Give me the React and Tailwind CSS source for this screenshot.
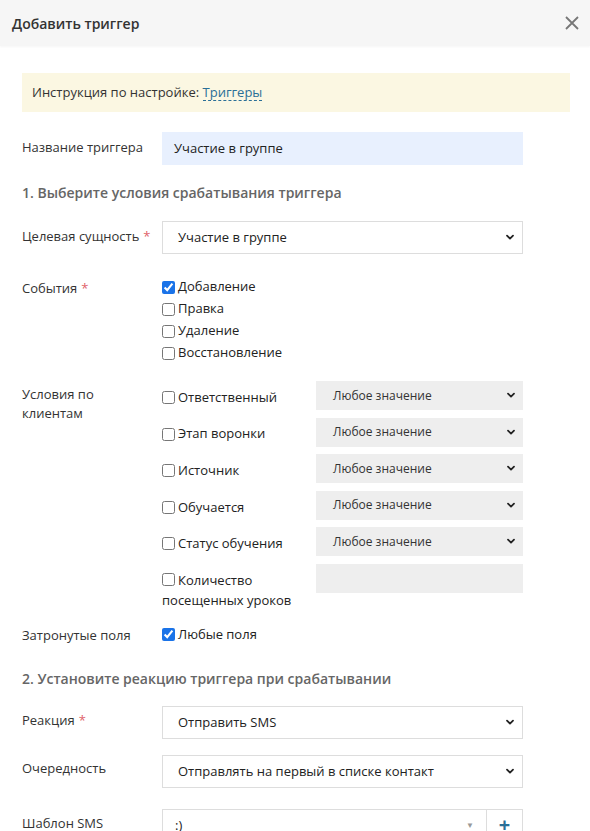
import { useState } from 'react';

function Chevron() {
  return (
    <svg width="10" height="7" viewBox="0 0 10 7" className="shrink-0 mr-[1px]">
      <path d="M2 1.6 L5 4.6 L8 1.6" fill="none" stroke="#222" strokeWidth="1.8" strokeLinecap="round" strokeLinejoin="round" />
    </svg>
  );
}

function Select({ value, small }) {
  if (small) {
    return (
      <div className="h-[29px] w-[207px] bg-[#eeeeee] flex items-center justify-between pl-[17px] pr-[6px] text-[12px] text-[#333]">
        <span>{value}</span>
        <Chevron />
      </div>
    );
  }
  return (
    <div className="h-[33px] w-[361px] border border-[#dddddd] bg-white flex items-center justify-between pl-[15px] pr-[6px] text-[13px] text-[#222]">
      <span>{value}</span>
      <Chevron />
    </div>
  );
}

function Req() {
  return <span className="text-[#e0626a] ml-[4px]">*</span>;
}

function Check({ label, checked }) {
  const [on, setOn] = useState(!!checked);
  return (
    <label className="flex items-center h-[22px] text-[13px] text-[#222]">
      <input
        type="checkbox"
        checked={on}
        onChange={(e) => setOn(e.target.checked)}
        className="w-[13px] h-[13px] mr-[3px] accent-[#1a73e8]"
      />
      {label}
    </label>
  );
}

const conditions = ['Ответственный', 'Этап воронки', 'Источник', 'Обучается', 'Статус обучения'];

export default function App() {
  return (
    <div className="h-[831px] overflow-hidden bg-white text-[13px] text-[#333]" style={{ fontFamily: '"Open Sans", "Noto Sans", sans-serif' }}>
      <header className="h-[46px] bg-[#f6f6f6] flex items-center justify-between pl-[12px] pr-[10px] shadow-[0_1px_2px_rgba(0,0,0,0.04)]">
        <div className="text-[14px] font-semibold text-[#333]">Добавить триггер</div>
        <svg width="16" height="16" viewBox="0 0 16 16">
          <path d="M2 2 L14 14 M14 2 L2 14" stroke="#777" strokeWidth="1.8" />
        </svg>
      </header>

      <main className="pl-[22px] pr-[20px]">
        <div className="mt-[27px] h-[39px] bg-[#fbf7e2] flex items-center pl-[10px] text-[13px] text-[#333]">
          Инструкция по настройке:&nbsp;
          <a className="text-[#2a6f97] border-b border-dashed border-[#2a6f97] leading-[15px]">Триггеры</a>
        </div>

        <div className="mt-[20px] flex">
          <div className="w-[140px] pt-[5px] leading-[20px]">Название триггера</div>
          <div className="h-[33px] w-[361px] bg-[#e8f0fe] flex items-center pl-[12px] text-[13px] text-[#222]">Участие в группе</div>
        </div>

        <div className="mt-[18px] text-[14px] font-semibold text-[#666] leading-[20px]">1. Выберите условия срабатывания триггера</div>

        <div className="mt-[18px] flex">
          <div className="w-[140px] pt-[5px] leading-[20px]">Целевая сущность<Req /></div>
          <Select value="Участие в группе" />
        </div>

        <div className="mt-[22px] flex">
          <div className="w-[140px] pt-[2px] leading-[20px]">События<Req /></div>
          <div className="flex flex-col">
            <Check label="Добавление" checked />
            <Check label="Правка" />
            <Check label="Удаление" />
            <Check label="Восстановление" />
          </div>
        </div>

        <div className="mt-[17px] flex">
          <div className="w-[140px] pt-[4px] leading-[19px]">Условия по<br />клиентам</div>
          <div className="flex flex-col gap-[7.6px]">
            {conditions.map((c) => (
              <div key={c} className="flex items-center">
                <div className="w-[154px] pt-[4px]"><Check label={c} /></div>
                <Select value="Любое значение" small />
              </div>
            ))}
            <div className="flex items-start">
              <label className="w-[154px] pt-[6px] leading-[20px] text-[13px] text-[#222]">
                <input type="checkbox" className="w-[13px] h-[13px] mr-[3px] align-[-1px]" />
                Количество посещенных уроков
              </label>
              <div className="h-[29px] w-[207px] bg-[#eeeeee]" />
            </div>
          </div>
        </div>

        <div className="mt-[14px] flex">
          <div className="w-[140px] pt-[1px] leading-[20px]">Затронутые поля</div>
          <Check label="Любые поля" checked />
        </div>

        <div className="mt-[23px] text-[14px] font-semibold text-[#666] leading-[20px]">2. Установите реакцию триггера при срабатывании</div>

        <div className="mt-[17px] flex">
          <div className="w-[140px] pt-[4px] leading-[20px]">Реакция<Req /></div>
          <Select value="Отправить SMS" />
        </div>

        <div className="mt-[16px] flex">
          <div className="w-[140px] pt-[3px] leading-[20px]">Очередность</div>
          <Select value="Отправлять на первый в списке контакт" />
        </div>

        <div className="mt-[21px] flex">
          <div className="w-[140px] pt-[4px] leading-[20px]">Шаблон SMS</div>
          <div className="h-[33px] w-[361px] border border-[#dddddd] flex">
            <div className="flex-1 flex items-center justify-between pl-[12px] pr-[12px] text-[13px] text-[#222]">
              <span>:)</span>
              <span className="text-[8px] text-[#999]">▼</span>
            </div>
            <div className="w-[36px] border-l border-[#dddddd] flex items-center justify-center text-[20px] font-bold text-[#2a6f97]">+</div>
          </div>
        </div>
      </main>
    </div>
  );
}
